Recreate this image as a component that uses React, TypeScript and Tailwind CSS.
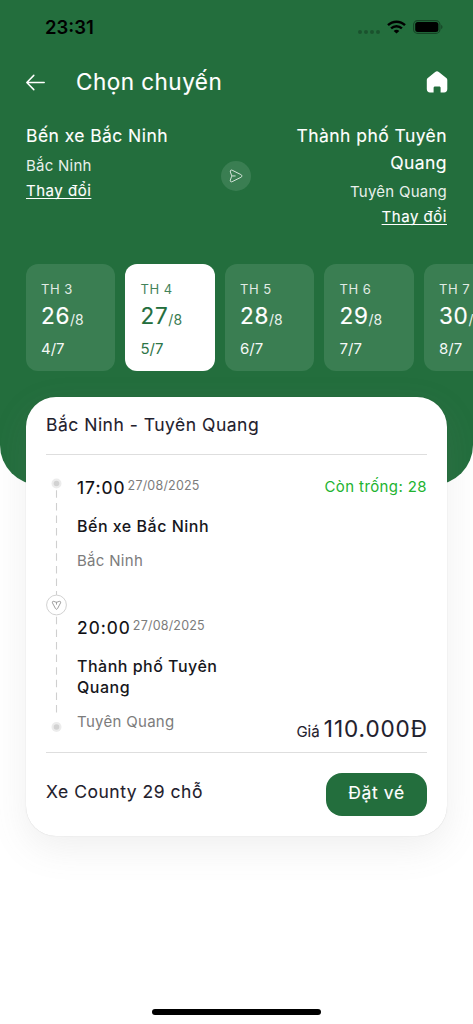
import type { ReactNode } from "react";

type TripDate = {
  weekday: string;
  day: string;
  lunar: string;
  active?: boolean;
}

const dates: TripDate[] = [
  { weekday: "TH 3", day: "26", lunar: "4/7" },
  { weekday: "TH 4", day: "27", lunar: "5/7", active: true },
  { weekday: "TH 5", day: "28", lunar: "6/7" },
  { weekday: "TH 6", day: "29", lunar: "7/7" },
  { weekday: "TH 7", day: "30", lunar: "8/7" },
]

function WifiIcon() {
  return (
    <svg width="19" height="14" viewBox="0 0 19 14" fill="none" stroke="#000" strokeWidth="2.4">
      <path d="M1 5.2C5.7 .5 13.3 .5 18 5.2" />
      <path d="M4.1 8.4C7.1 5.5 11.9 5.5 14.9 8.4" />
      <path d="M9.5 13.6L6.7 10.9C8.3 9.5 10.7 9.5 12.3 10.9Z" fill="#000" stroke="none" />
    </svg>
  )
}

function BatteryIcon() {
  return (
    <svg width="30" height="14" viewBox="0 0 30 14" fill="none">
      <rect x=".6" y=".6" width="26.3" height="12.8" rx="4" stroke="#000" strokeOpacity=".4" strokeWidth="1.1" />
      <rect x="2.2" y="2.1" width="23.2" height="9.8" rx="2.5" fill="#000" />
      <path d="M28.3 4.8C29.8 5.5 29.8 8.5 28.3 9.2Z" fill="#000" fillOpacity=".45" />
    </svg>
  )
}

function BackIcon() {
  return (
    <svg width="20" height="17" viewBox="0 0 20 17" fill="none" stroke="#fff" strokeWidth="1.5" strokeLinecap="round" strokeLinejoin="round">
      <path d="M8.8 1.4L1.8 8.5L8.8 15.6M2 8.5H19.2" />
    </svg>
  )
}

function HomeIcon() {
  return (
    <svg width="22" height="22" viewBox="0 0 22 22" fill="#fff">
      <path d="M9.2 .9C10.4 0 11.6 0 12.8 .9L20 6.7C20.9 7.4 21.3 8.1 21.3 9.1V17.9C21.3 20.1 20.1 21.4 18.1 21.4H14.6V16.9C14.6 15.9 14.1 15.4 13.1 15.4H9.1C8.1 15.4 7.6 15.9 7.6 16.9V21.4H4C2 21.4 .8 20.1 .8 17.9V9.1C.8 8.1 1.2 7.4 2.1 6.7Z" />
    </svg>
  )
}

function SendIcon({ className }: { className?: string }) {
  return (
    <svg className={className} viewBox="0 0 14 14" fill="none" stroke="currentColor" strokeLinecap="round" strokeLinejoin="round">
      <path d="M1.3 2.7C1 1.4 1.9 .7 3.1 1.2L11.9 5.6C13.3 6.3 13.3 7.6 11.9 8.3L3.1 12.7C1.9 13.2 1 12.5 1.3 11.2L2.6 7.4C2.7 7.1 2.7 6.8 2.6 6.5ZM2.8 6.95H6.2" />
    </svg>
  )
}

function StatusBar() {
  return (
    <div className="h-[55px] flex justify-between pl-[45px] pr-[30px]">
      <span className="mt-[15px] text-[18.5px] leading-6 font-semibold text-black">23:31</span>
      <div className="flex items-center h-[54px]">
        <div className="flex gap-[2px] mt-[10px] mr-[7px]">
          {[0, 1, 2, 3].map(i => <span key={i} className="w-1 h-1 rounded-full bg-black/25" />)}
        </div>
        <WifiIcon />
        <div className="ml-[7px]"><BatteryIcon /></div>
      </div>
    </div>
  )
}

function DateCard({ date }: { date: TripDate }) {
  return (
    <div className={`shrink-0 w-[89.5px] h-[107px] rounded-xl pl-[15.5px] pt-[17px] ${date.active ? "bg-white text-[#236e3d]" : "bg-[#3a7e52] text-white"}`}>
      <div className="text-[13px] leading-[17px] tracking-[0.5px] opacity-85">{date.weekday}</div>
      <div className="flex leading-[36px]">
        <span className="text-[22.5px] tracking-[0.7px] [-webkit-text-stroke:0.15px]">{date.day}</span>
        <span className="text-[14px] pt-[4px] opacity-90">/8</span>
      </div>
      <div className="mt-px text-[15px] leading-[20px] opacity-95">{date.lunar}</div>
    </div>
  )
}

function Stop({ time, children, place, className }: { time: string, children: ReactNode, place: string, className?: string }) {
  return (
    <div className={className}>
      <div className="flex leading-6">
        <span className="text-[17.5px] tracking-[1px] [-webkit-text-stroke:0.15px] text-[#0c0c10]">{time}</span>
        <span className="ml-[2px] -mt-[2px] text-[12.5px] tracking-[0.2px] text-[#7c7c7c]">27/08/2025</span>
      </div>
      <div className="mt-[15.5px] text-[16px] leading-[21.6px] font-medium tracking-[0.5px] text-[#17171c]">{children}</div>
      <div className="mt-[13.5px] text-[15px] leading-[20px] tracking-[0.3px] text-[#7c7c7c]">{place}</div>
    </div>
  )
}

function Timeline() {
  return (
    <svg width="21" height="260" viewBox="0 0 21 260" fill="none" className="shrink-0 -mt-px">
      <path d="M10.5 15.3V124M10.5 141.8V240" stroke="#cfcfcf" strokeWidth="1.1" strokeDasharray="7.5 5.1" />
      <circle cx="10.5" cy="8.5" r="5" fill="#ececec" />
      <circle cx="10.5" cy="8.5" r="2.8" fill="#d2d2d2" />
      <circle cx="10.5" cy="130" r="9.9" fill="#fff" stroke="#d2d2d2" />
      <path d="M7.9 126.4C6.7 126 6 126.8 6.5 128L9.5 133.6C10 134.5 11 134.5 11.5 133.6L14.5 128C15 126.8 14.3 126 13.1 126.4L11 127.2C10.7 127.3 10.3 127.3 10 127.2ZM10.5 127.3V129.6" stroke="#858585" strokeWidth=".8" />
      <circle cx="10.5" cy="252" r="5" fill="#ececec" />
      <circle cx="10.5" cy="252" r="2.8" fill="#d2d2d2" />
    </svg>
  )
}

export default function App() {
  return (
    <div className="w-[473px] h-[1024px] overflow-hidden bg-white flex flex-col font-['Inter',sans-serif]">

      <div className="h-[485px] shrink-0 bg-[#236e3d] rounded-b-[40px] text-white">
        <StatusBar />

        <div className="h-[54px] flex items-center px-[25px]">
          <BackIcon />
          <h1 className="ml-[31px] flex-1 text-[22.5px] leading-7 tracking-[0.48px] [-webkit-text-stroke:0.12px]">Chọn chuyến</h1>
          <HomeIcon />
        </div>

        <div className="h-[155px] pt-[14px] px-[26px] flex justify-between">
          <div className="w-[169px]">
            <div className="text-[17.5px] leading-[26.7px] tracking-[0.43px] [-webkit-text-stroke:0.12px]">Bến xe Bắc Ninh</div>
            <div className="mt-[3px] text-[15px] leading-[25px] tracking-[0.25px] opacity-90">Bắc Ninh</div>
            <a className="block text-[15px] leading-[25px] tracking-[0.52px] [-webkit-text-stroke:0.12px] underline underline-offset-[2px] [text-decoration-skip-ink:none]">Thay đổi</a>
          </div>
          <div className="mt-[38px] w-[30px] h-[30px] rounded-full bg-[#3a7e52] flex items-center justify-center">
            <SendIcon className="w-[14px] h-[14px] opacity-80" />
          </div>
          <div className="w-[171px] text-right">
            <div className="text-[17.5px] leading-[26.7px] tracking-[0.43px] [-webkit-text-stroke:0.12px]">Thành phố Tuyên<br />Quang</div>
            <div className="mt-[3px] text-[15px] leading-[25px] tracking-[0.25px] opacity-90">Tuyên Quang</div>
            <a className="block text-[15px] leading-[25px] tracking-[0.52px] [-webkit-text-stroke:0.12px] underline underline-offset-[2px] [text-decoration-skip-ink:none]">Thay đổi</a>
          </div>
        </div>

        <div className="flex gap-[10px] pl-[25.5px] overflow-hidden">
          {dates.map(date => <DateCard key={date.weekday} date={date} />)}
        </div>
      </div>

      <div className="relative -mt-[88px] mx-[26px] h-[439px] shrink-0 bg-white rounded-[30px] px-[20px] shadow-[0_12px_36px_rgba(120,120,120,0.12),0_0_1px_rgba(0,0,0,0.2)]">
        <div className="h-[58px] pt-[16px] border-b border-[#dedede] text-[17.5px] leading-6 tracking-[0.5px] [-webkit-text-stroke:0.1px] text-[#1f212d]">
          Bắc Ninh - Tuyên Quang
        </div>

        <div className="h-[298px] pt-[21px] flex border-b border-[#dedede]">
          <Timeline />
          <div className="w-[170px] ml-[10px]">
            <Stop time="17:00" place="Bắc Ninh" className="h-[140px]">Bến xe Bắc Ninh</Stop>
            <Stop time="20:00" place="Tuyên Quang">Thành phố Tuyên<br />Quang</Stop>
          </div>
          <div className="flex-1 flex flex-col justify-between items-end pb-[6px] whitespace-nowrap">
            <span className="text-[15px] leading-[22px] tracking-[0.4px] text-[#22b32f]">Còn trống: 28</span>
            <div className="text-[#1f212d] leading-7 [-webkit-text-stroke:0.1px]">
              <span className="text-[15px]">Giá </span>
              <span className="text-[22.5px] tracking-[0.92px] -mr-[0.9px]">110.000Đ</span>
            </div>
          </div>
        </div>

        <div className="pt-[20px] flex justify-between">
          <span className="mt-[7px] text-[17.5px] leading-6 tracking-[0.52px] [-webkit-text-stroke:0.1px] text-[#1f212d]">Xe County 29 chỗ</span>
          <button className="w-[101px] h-[43px] rounded-2xl bg-[#236e3d] text-white text-[17.5px] leading-6 pb-[3px] tracking-[0.6px] [-webkit-text-stroke:0.12px]">Đặt vé</button>
        </div>
      </div>

      <div className="mt-auto mb-[9px] mx-auto w-[169px] h-[6px] rounded-full bg-black" />
    </div>
  )
}
